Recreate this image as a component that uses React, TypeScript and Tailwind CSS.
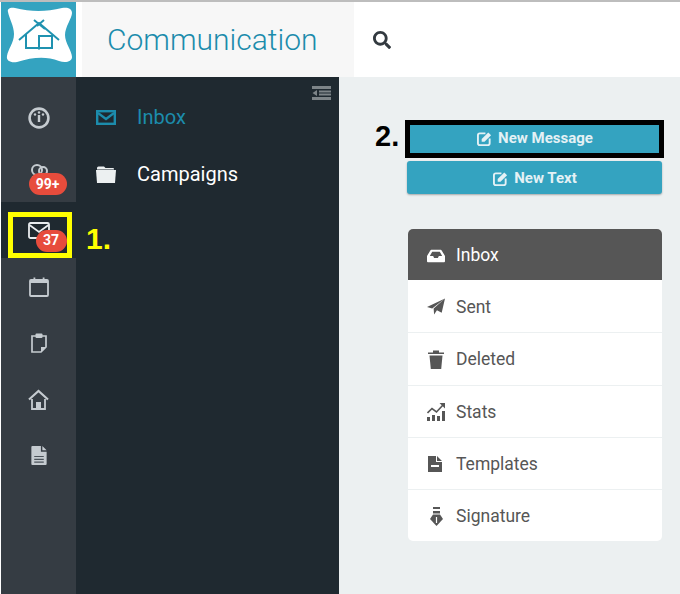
import React from "react";
import { FaSearch } from "react-icons/fa";

const Logo = () => (
  <svg viewBox="0 0 75 75" className="w-[75px] h-[75px]">
    <path d="M7 10 C6 7 9 5 14 6 C30 10 45 10 61 6 C66 5 71 6 71 11 C71 16 64 25 64 33 C64 41 71 49 71 55 C71 60 64 61 58 59 C45 54 32 55 16 60 C10 61 5 59 6 54 C7 47 13 41 13 32 C13 24 8 16 7 10 Z" fill="#fff" />
    <g fill="none" stroke="#1f92b0" strokeWidth="2">
      <path d="M18 38 L38 21 L58 38" />
      <path d="M25 32 V46 H51 V33" />
      <path d="M38 47.5 V34 H50" />
      <path d="M33 18 L44 27 M43 18 L36 24" />
    </g>
  </svg>
);

const Gauge = () => (
  <svg viewBox="0 0 22 22" className="w-[22px] h-[22px]">
    <circle cx="11" cy="11" r="9.4" fill="none" stroke="#c5cbd0" strokeWidth="2.6" />
    <path d="M11 8 V15" stroke="#c5cbd0" strokeWidth="2.4" />
    <circle cx="7" cy="7.5" r="1.2" fill="#c5cbd0" />
    <circle cx="11" cy="5.5" r="1.2" fill="#c5cbd0" />
    <circle cx="15" cy="7.5" r="1.2" fill="#c5cbd0" />
  </svg>
);

const People = () => (
  <svg viewBox="0 0 22 22" className="w-[22px] h-[22px]">
    <g fill="none" stroke="#c5cbd0" strokeWidth="2">
      <circle cx="9" cy="7" r="5" />
      <circle cx="15" cy="8" r="4" />
      <path d="M5 20 V13 M19 20 V13" />
    </g>
  </svg>
);

const Mail = () => (
  <svg viewBox="0 0 22 17" className="w-[22px] h-[17px]">
    <rect x="1" y="1" width="20" height="15" rx="1.5" fill="none" stroke="#e8ecef" strokeWidth="1.8" />
    <path d="M1.5 3 L11 10 L20.5 3" fill="none" stroke="#e8ecef" strokeWidth="1.8" />
  </svg>
);

const Calendar = () => (
  <svg viewBox="0 0 20 20" className="w-[20px] h-[20px]">
    <rect x="1" y="3" width="18" height="16" rx="1" fill="none" stroke="#c5cbd0" strokeWidth="1.8" />
    <rect x="1" y="3" width="18" height="3" fill="#c5cbd0" />
    <rect x="4.5" y="0.5" width="1.8" height="5" fill="#c5cbd0" />
    <rect x="13.7" y="0.5" width="1.8" height="5" fill="#c5cbd0" />
  </svg>
);

const Clip = () => (
  <svg viewBox="0 0 16 20" className="w-[16px] h-[20px]">
    <path d="M1 3 H15 V14 L10 19 H1 Z" fill="none" stroke="#c5cbd0" strokeWidth="1.7" />
    <path d="M15 14 H10 V19 Z" fill="#c5cbd0" />
    <rect x="4.5" y="0.5" width="7" height="4.5" rx="1" fill="#c5cbd0" />
  </svg>
);

const Home = () => (
  <svg viewBox="0 0 21 21" className="w-[21px] h-[21px]">
    <path d="M1 10.5 L10.5 2 L20 10.5" fill="none" stroke="#c5cbd0" strokeWidth="2.2" />
    <path d="M4 10 V20 H17 V10" fill="none" stroke="#c5cbd0" strokeWidth="1.8" />
    <rect x="8" y="13" width="5" height="7" fill="#c5cbd0" />
  </svg>
);

const Doc = () => (
  <svg viewBox="0 0 18 22" className="w-[18px] h-[21px]">
    <path d="M1 2 Q1 1 2 1 H11 V7 H17 V20 Q17 21 16 21 H2 Q1 21 1 20 Z M12.5 1 L17 5.5 H12.5 Z" fill="#c5cbd0" />
    <path d="M4 12 H14 M4 15 H14 M4 18 H14" stroke="#4b535a" strokeWidth="1.2" />
  </svg>
);

const Collapse = () => (
  <svg viewBox="0 0 19 14" className="w-[19px] h-[14px]">
    <path d="M0 0 H19 V3 H0 Z M7 4.5 H19 V6.5 H7 Z M7 7.5 H19 V9.5 H7 Z M0 11 H19 V14 H0 Z M5 4 V10 L0.5 7 Z" fill="#7d8488" />
  </svg>
);

const PanelMail = () => (
  <svg viewBox="0 0 20 15" className="w-[20px] h-[15px]">
    <rect x="1.2" y="1.2" width="17.6" height="12.6" fill="none" stroke="#1c8cac" strokeWidth="2.4" />
    <path d="M2 3 L10 9 L18 3" fill="none" stroke="#1c8cac" strokeWidth="2.2" />
  </svg>
);

const Folder = () => (
  <svg viewBox="0 0 20 17" className="w-[20px] h-[17px]">
    <path d="M1 2 Q1 0.5 2.5 0.5 H8 L9.5 2 H17 Q18 2 18 3 V3.5 H1 Z" fill="#ecf0f1" />
    <path d="M0 4 H20 L19 17 H1 Z" fill="#ecf0f1" />
  </svg>
);

const Edit = () => (
  <svg viewBox="0 0 16 16" className="w-[15px] h-[15px]">
    <path d="M9 2.5 H3 Q1 2.5 1 4.5 V13 Q1 15 3 15 H11.5 Q13.5 15 13.5 13 V8" fill="none" stroke="#e4f1f5" strokeWidth="2" />
    <path d="M5 8.5 L12 1.5 L15 4.5 L8 11.5 H5 Z" fill="#e4f1f5" />
  </svg>
);

const Tray = () => (
  <svg viewBox="0 0 19 14" className="w-[19px] h-[14px]">
    <path d="M4.5 0.5 H14.5 Q15 0.5 15.5 1.2 L19 7 V12.5 Q19 13.5 18 13.5 H1 Q0 13.5 0 12.5 V7 L3.5 1.2 Q4 0.5 4.5 0.5 Z M5.5 2.5 L3 7 H6.5 L7.5 9 H11.5 L12.5 7 H16 L13.5 2.5 Z" fill="#fff" fillRule="evenodd" />
  </svg>
);

const Plane = () => (
  <svg viewBox="0 0 19 18" className="w-[19px] h-[18px]">
    <path d="M19 0 L15.5 15 L10.5 12.5 L7.5 17 L7 10.5 Z M19 0 L0 9 L5.5 10.5 Z" fill="#565656" />
  </svg>
);

const Trash = () => (
  <svg viewBox="0 0 16 19" className="w-[16px] h-[19px]">
    <path d="M0 2.5 H5 V0.5 H11 V2.5 H16 V4 H0 Z" fill="#565656" />
    <path d="M1.5 5.5 H14.5 L13.2 19 H2.8 Z" fill="#565656" />
  </svg>
);

const Stats = () => (
  <svg viewBox="0 0 18 19" className="w-[18px] h-[19px]">
    <path d="M0 15 H3 V19 H0 Z M5 13 H8 V19 H5 Z M10 14 H13 V19 H10 Z M15 9 H18 V19 H15 Z" fill="#565656" />
    <path d="M0.5 11 L5 6.5 L9.5 10 L16 3" fill="none" stroke="#565656" strokeWidth="1.6" />
    <path d="M12.5 1 H18 V6.5 Z" fill="#565656" />
  </svg>
);

const Template = () => (
  <svg viewBox="0 0 14 16" className="w-[14px] h-[16px] -translate-x-[1px]">
    <path d="M0 0 H8 V6 H14 V16 H0 Z M9 0 L14 5 H9 Z" fill="#565656" />
    <rect x="3" y="9" width="8" height="2" fill="#fff" />
  </svg>
);

const Nib = () => (
  <svg viewBox="0 0 13 19" className="w-[13px] h-[19px]">
    <rect x="3" y="0" width="7" height="2" fill="#565656" />
    <rect x="3" y="4" width="7" height="2.5" fill="#565656" />
    <path d="M3 7.5 H10 L13 12 L6.5 19 L0 12 Z" fill="#565656" />
    <path d="M6.5 10 V16" stroke="#fff" strokeWidth="1.2" />
  </svg>
);

const SideItem = ({ children, active }: { children: React.ReactNode; active?: boolean }) => (
  <div className={`h-14 flex items-center justify-center ${active ? "bg-[#1f2930]" : ""}`}>{children}</div>
);

const rows = [
  { label: "Sent", icon: <Plane /> },
  { label: "Deleted", icon: <Trash /> },
  { label: "Stats", icon: <Stats /> },
  { label: "Templates", icon: <Template /> },
  { label: "Signature", icon: <Nib /> },
];

export default function App() {
  return (
    <div className="relative w-[680px] h-[594px] overflow-hidden bg-white font-['Roboto',sans-serif] border-t-2 border-[#bdbdbd]">
      <div className="flex h-[75px] pl-px">
        <div className="w-[75px] bg-[#34a3c0] shrink-0"><Logo /></div>
        <div className="w-[6px] bg-white shrink-0" />
        <div className="w-[272px] bg-[#f7f7f7] pl-[25px] flex items-center">
          <span className="text-[30px] font-light text-[#1c8cac]">Communication</span>
        </div>
        <div className="flex-1 flex items-center pl-[19px]">
          <FaSearch className="text-[18px] text-[#333a40]" />
        </div>
      </div>

      <div className="flex h-[517px] pl-px">
        <div className="w-[75px] bg-[#353c43] pt-[13px] shrink-0 flex flex-col">
          <SideItem><Gauge /></SideItem>
          <SideItem>
            <div className="relative"><People />
              <span className="absolute left-[1px] top-[10px] w-[38px] h-[22px] rounded-full bg-[#e74c3c] text-white text-[14px] font-bold flex items-center justify-center">99+</span>
            </div>
          </SideItem>
          <SideItem active>
            <div className="relative"><Mail />
              <span className="absolute left-[8px] top-[8px] w-[31px] h-[22px] rounded-full bg-[#e74c3c] text-white text-[14px] font-bold flex items-center justify-center">37</span>
            </div>
          </SideItem>
          <SideItem><div className="pt-px"><Calendar /></div></SideItem>
          <SideItem><div className="pt-px"><Clip /></div></SideItem>
          <SideItem><div className="pt-[2px]"><Home /></div></SideItem>
          <SideItem><div className="pt-[2px]"><Doc /></div></SideItem>
        </div>

        <div className="relative w-[263px] bg-[#1f2930] shrink-0 pt-[12px]">
          <div className="absolute right-[8px] top-[9px]"><Collapse /></div>
          <div className="h-14 flex items-center pl-[20px] gap-[21px]">
            <PanelMail />
            <span className="text-[20px] text-[#1c8cac]">Inbox</span>
          </div>
          <div className="h-[58px] flex items-center pl-[20px] gap-[21px]">
            <Folder />
            <span className="text-[20px] text-white">Campaigns</span>
          </div>
        </div>

        <div className="flex-1 bg-[#ecf0f1] pl-[68px] pr-[18px] pt-[45px]">
          <div className="h-[33px] pl-px rounded-[3px] bg-[#34a3c0] flex items-center justify-center gap-[6px] text-[#e4f1f5] text-[15px] font-bold">
            <Edit /><span>New Message</span>
          </div>
          <div className="h-[33px] mt-[6px] pt-px pl-px rounded-[3px] bg-[#34a3c0] shadow-[0_1px_2px_rgba(0,0,0,0.3)] flex items-center justify-center gap-[6px] text-[#e4f1f5] text-[15px] font-bold">
            <Edit /><span>New Text</span>
          </div>

          <div className="mt-[35px] ml-px rounded-[5px] bg-white overflow-hidden">
            <div className="h-[51px] pt-[2px] bg-[#565656] text-white flex items-center pl-[19px]">
              <span className="w-[18px] flex justify-center"><Tray /></span>
              <span className="ml-[11px] text-[17.5px]">Inbox</span>
            </div>
            {rows.map((r, i) => (
              <div key={r.label} className={`h-[52.25px] pt-px border-t flex items-center pl-[19px] text-[#565656] ${i > 0 ? "border-[#ecf0f1]" : "border-white"}`}>
                <span className="w-[18px] flex justify-center">{r.icon}</span>
                <span className="ml-[11px] text-[17.5px]">{r.label}</span>
              </div>
            ))}
          </div>
        </div>
      </div>

      <div className="absolute left-[8px] top-[210px] w-[64px] h-[46px] border-[5px] border-[#ffff00]" />
      <span className="absolute left-[86px] top-[219px] text-[30px] leading-[36px] font-bold text-[#ffff00] font-['Liberation_Sans',sans-serif]">1.</span>
      <div className="absolute left-[405px] top-[118px] w-[259px] h-[38px] border-[5px] border-black" />
      <span className="absolute left-[375px] top-[117px] text-[29px] leading-[34px] font-bold text-black font-['Liberation_Sans',sans-serif]">2.</span>
    </div>
  );
}
